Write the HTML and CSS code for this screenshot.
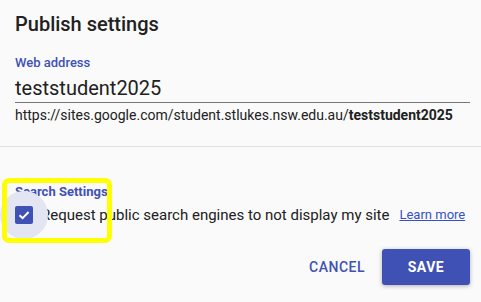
FILE: index.html
```html
<!DOCTYPE html>
<html lang="en">
<head>
    <meta charset="UTF-8">
    <title>Publish settings</title>
    <link rel="stylesheet" href="styles.css">
</head>
<body>
    <div class="dialog">
        <h1 class="dialog-title">Publish settings</h1>

        <div class="field">
            <label class="field-label" for="webAddress">Web address</label>
            <div class="field-input" id="webAddress">teststudent2025</div>
            <div class="field-url">https://sites.google.com/student.stlukes.nsw.edu.au/<b>teststudent2025</b></div>
        </div>

        <div class="divider"></div>

        <div class="search-settings">
            <div class="section-label">Search Settings</div>
            <div class="check-row">
                <span class="checkbox-wrap">
                    <span class="ripple"></span>
                    <span class="checkbox">
                        <svg width="18" height="18" viewBox="0 0 18 18">
                            <path d="M4.5 9.2 L7.6 12.2 L13.6 6" fill="none" stroke="#fff" stroke-width="2"/>
                        </svg>
                    </span>
                </span>
                <span class="check-text">Request public search engines to not display my site</span>
                <a class="learn-more" href="#">Learn more</a>
            </div>
            <!-- yellow annotation box drawn over the screenshot -->
            <div class="highlight"></div>
        </div>

        <div class="actions">
            <button class="btn-text">CANCEL</button>
            <button class="btn-save">SAVE</button>
        </div>
    </div>
</body>
</html>
```

FILE: styles.css
```css
* {
    box-sizing: border-box;
    margin: 0;
    padding: 0;
}

body {
    font-family: Roboto, "Liberation Sans", Arial, sans-serif;
    background-color: #fafafa;
    color: #212121;
    width: 481px;
    height: 302px;
    overflow: hidden;
}

.dialog {
    display: flex;
    flex-direction: column;
}

.dialog-title {
    font-size: 20px;
    font-weight: 500;
    line-height: 24px;
    color: #212121;
    padding: 12px 15px 0;
}

.field {
    padding: 19px 11px 0 15px;
}

.field-label {
    display: block;
    font-size: 13px;
    font-weight: 500;
    line-height: 16px;
    color: #3f51b5;
}

.field-input {
    font-size: 20px;
    line-height: 24px;
    margin-top: 5px;
    padding-bottom: 2px;
    border-bottom: 1px solid #757575;
    color: #212121;
}

.field-url {
    font-size: 14px;
    line-height: 18px;
    margin-top: 3px;
    color: #212121;
    white-space: nowrap;
}

.field-url b {
    font-weight: 700;
}

.divider {
    height: 1px;
    background-color: #e0e0e0;
    margin-top: 22px;
}

.search-settings {
    position: relative;
    padding: 37px 15px 0;
}

.section-label {
    font-size: 13px;
    font-weight: 700;
    line-height: 16px;
    color: #3f51b5;
}

.check-row {
    display: flex;
    align-items: center;
    margin-top: 5px;
    white-space: nowrap;
}

.checkbox-wrap {
    position: relative;
    width: 18px;
    height: 18px;
    flex-shrink: 0;
}

.ripple {
    position: absolute;
    left: -15px;
    top: -15px;
    width: 48px;
    height: 48px;
    border-radius: 50%;
    background-color: #e3e5f2;
}

.checkbox {
    position: relative;
    display: block;
    width: 18px;
    height: 18px;
    border-radius: 2px;
    background-color: #3f51b5;
}

.checkbox svg {
    display: block;
}

.check-text {
    font-size: 15px;
    line-height: 20px;
    margin-left: 8px;
    color: #212121;
}

.learn-more {
    font-size: 13px;
    line-height: 20px;
    margin-left: 10px;
    color: #3352c9;
    text-decoration: underline;
}

.highlight {
    position: absolute;
    left: 2px;
    top: 31px;
    width: 110px;
    height: 65px;
    border: 5px solid #ffff00;
    border-radius: 7px;
}

.actions {
    display: flex;
    justify-content: flex-end;
    align-items: center;
    padding: 24px 11px 0;
    gap: 17px;
}

.btn-text {
    font-family: inherit;
    font-size: 14px;
    font-weight: 500;
    letter-spacing: 0.5px;
    color: #3f51b5;
    background: none;
    border: none;
    padding: 0 0;
}

.btn-save {
    font-family: inherit;
    font-size: 14px;
    font-weight: 700;
    letter-spacing: 0.5px;
    color: #fff;
    background-color: #3f51b5;
    border: none;
    border-radius: 3px;
    width: 88px;
    height: 36px;
    box-shadow: 0 1px 4px rgba(0, 0, 0, 0.3);
}
```
